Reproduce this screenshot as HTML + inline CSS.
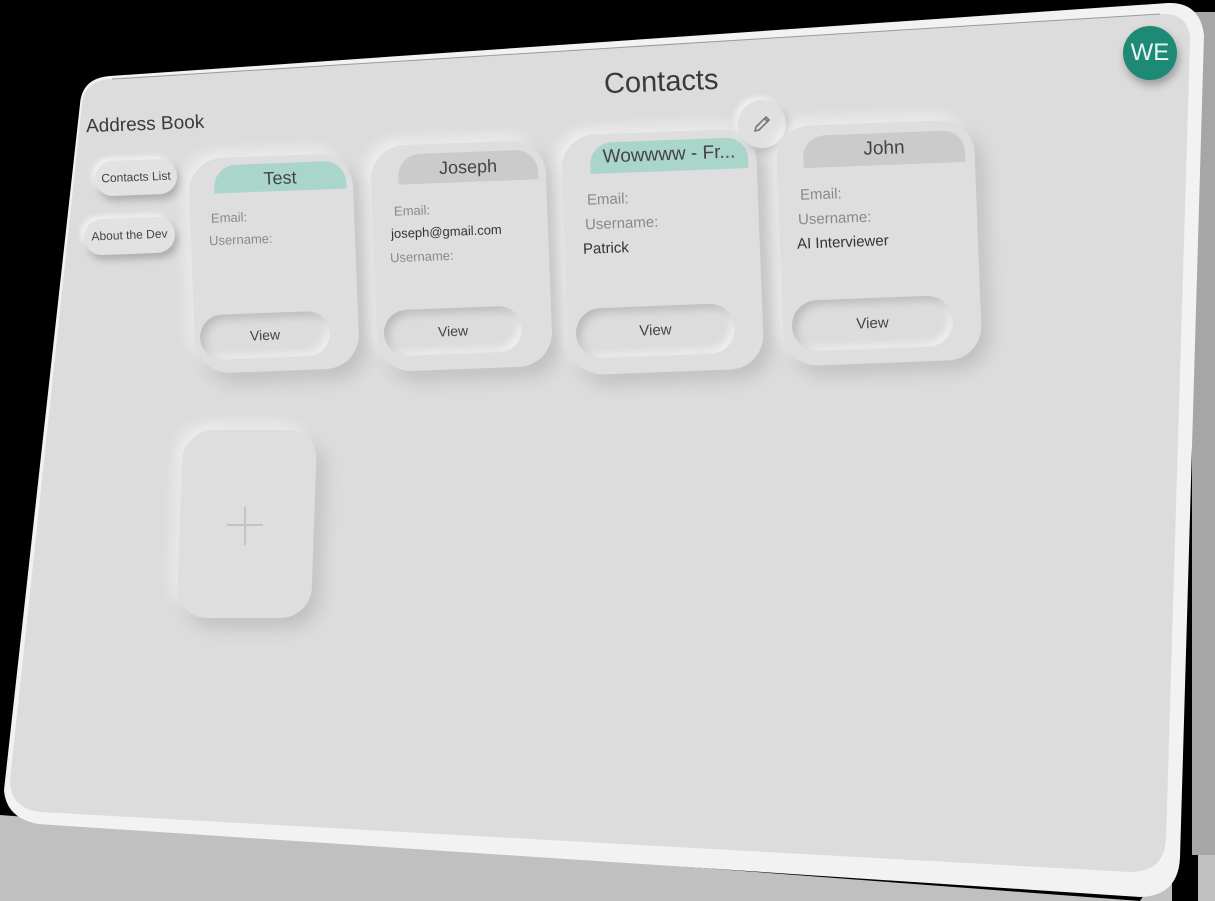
<!DOCTYPE html>
<html><head><meta charset="utf-8"><style>
html,body{margin:0;padding:0;width:1215px;height:901px;overflow:hidden;background:#000;font-family:"Liberation Sans",sans-serif;}
.a{position:absolute;}
.r{transform:rotate(-2.2deg);transform-origin:center;}
.card{position:absolute;background:#dedede;border-radius:34px;box-shadow:8px 10px 18px rgba(0,0,0,.13),-6px -6px 14px rgba(255,255,255,.55);}
.hd{position:absolute;border-radius:22px 22px 0 0;text-align:center;color:#444;font-size:18px;line-height:30px;}
.lb{position:absolute;color:#8a8a8a;font-size:13px;white-space:nowrap;}
.vl{position:absolute;color:#333;font-size:14px;white-space:nowrap;}
.btn{position:absolute;border-radius:26px;background:#dcdcdc;box-shadow:inset 4px 4px 9px rgba(0,0,0,.16),inset -4px -4px 8px rgba(255,255,255,.6);text-align:center;color:#444;font-size:15px;}
.side{position:absolute;border-radius:18px;background:#e2e2e2;box-shadow:3px 5px 8px rgba(0,0,0,.22),-3px -3px 6px rgba(255,255,255,.7);color:#444;font-size:12px;text-align:center;line-height:34px;}
</style></head><body>
<svg class="a" style="left:0;top:0" width="1215" height="901">
<polygon points="0,815 1140,901 0,901" fill="#c0c0c0"/>
<polygon points="1140,901 1215,901 1215,855 1170,855" fill="#c0c0c0"/>
<rect x="1192" y="12" width="23" height="843" fill="#a6a6a6"/>
<rect x="1172" y="855" width="26" height="46" fill="#000"/>
<path d="M80,104 Q82,78 110,76 L1168,3 Q1200,2 1204,35 L1180,858 Q1178,896 1140,897 L38,824 Q6,818 4,790 Z" fill="#f2f2f2"/>
<path d="M82,104 Q84,80 112,79 L1160,14 Q1190,12 1190,42 L1166,840 Q1164,872 1130,872 L40,812 Q10,808 10,780 Z" fill="#dcdcdc"/>
<path d="M112,79 L1160,14" stroke="#9a9a9a" stroke-width="1" fill="none"/>
</svg>

<div class="a r" style="left:604px;top:66px;font-size:29px;color:#3a3a3a;">Contacts</div>
<div class="a r" style="left:86px;top:114px;font-size:19px;color:#3a3a3a;">Address Book</div>
<div class="side r" style="left:95px;top:160px;width:82px;height:35px;">Contacts List</div>
<div class="side r" style="left:84px;top:218px;width:91px;height:36px;">About the Dev</div>

<div class="a" style="left:1123px;top:26px;width:54px;height:54px;border-radius:50%;background:#1e8a76;box-shadow:2px 5px 9px rgba(0,0,0,.3);color:#e8f5f2;font-size:24px;line-height:54px;text-align:center;">WE</div>

<!-- card 1 -->
<div class="card r" style="left:192px;top:156px;width:164px;height:215px;"></div>
<div class="hd r" style="left:214px;top:163px;width:132px;height:28px;background:#a9d5cb;">Test</div>
<div class="lb r" style="left:211px;top:210px;">Email:</div>
<div class="lb r" style="left:209px;top:232px;">Username:</div>
<div class="btn r" style="left:200px;top:313px;width:130px;height:45px;line-height:45px;font-size:14px;">View</div>

<!-- card 2 -->
<div class="card r" style="left:374px;top:143px;width:175px;height:226px;"></div>
<div class="hd r" style="left:398px;top:152px;width:140px;height:30px;background:#cbcbcb;">Joseph</div>
<div class="lb r" style="left:394px;top:203px;">Email:</div>
<div class="vl r" style="left:391px;top:224px;font-size:13px;">joseph@gmail.com</div>
<div class="lb r" style="left:390px;top:249px;">Username:</div>
<div class="btn r" style="left:384px;top:308px;width:138px;height:46px;line-height:46px;font-size:14px;">View</div>

<!-- card 3 -->
<div class="card r" style="left:565px;top:132px;width:195px;height:240px;"></div>
<div class="hd r" style="left:590px;top:140px;width:158px;height:31px;background:#a9d5cb;font-size:19px;">Wowwww - Fr...</div>
<div class="lb r" style="left:587px;top:191px;font-size:15px;">Email:</div>
<div class="lb r" style="left:585px;top:215px;font-size:15px;">Username:</div>
<div class="vl r" style="left:583px;top:240px;font-size:15px;">Patrick</div>
<div class="btn r" style="left:576px;top:306px;width:159px;height:50px;line-height:50px;">View</div>
<div class="a" style="left:738px;top:100px;width:48px;height:48px;border-radius:50%;background:#e0e0e0;box-shadow:3px 4px 8px rgba(0,0,0,.15),-3px -3px 7px rgba(255,255,255,.7);"></div>
<svg class="a" style="left:750px;top:112px" width="24" height="24" viewBox="0 0 24 24"><path d="M5,19 L6,15 L16,5 L19,8 L9,18 Z M14.5,6.5 L17.5,9.5" fill="none" stroke="#777" stroke-width="1.6" stroke-linejoin="round"/></svg>

<!-- card 4 -->
<div class="card r" style="left:780px;top:123px;width:198px;height:240px;"></div>
<div class="hd r" style="left:803px;top:133px;width:162px;height:32px;background:#cbcbcb;font-size:19px;line-height:32px;">John</div>
<div class="lb r" style="left:800px;top:186px;font-size:15px;">Email:</div>
<div class="lb r" style="left:798px;top:210px;font-size:15px;">Username:</div>
<div class="vl r" style="left:797px;top:234px;font-size:15px;">AI Interviewer</div>
<div class="btn r" style="left:792px;top:298px;width:161px;height:51px;line-height:51px;">View</div>

<!-- add card -->
<div class="card" style="left:180px;top:430px;width:134px;height:188px;border-radius:30px;transform:rotate(2deg) skewY(-2deg);"></div>
<div class="a" style="left:227px;top:524px;width:36px;height:2px;background:#c4c4c4;"></div>
<div class="a" style="left:244px;top:507px;width:2px;height:38px;background:#c4c4c4;"></div>
</body></html>
